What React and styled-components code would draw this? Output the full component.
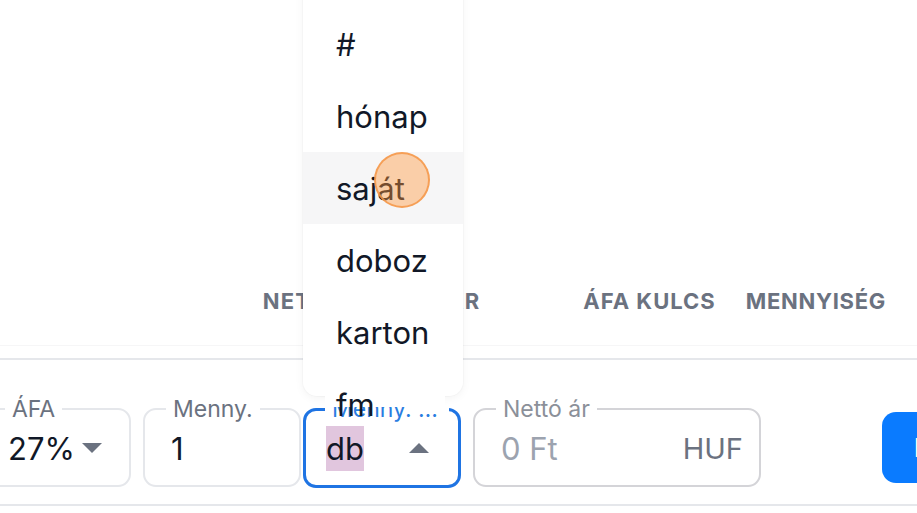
import React from "react";
import styled, { createGlobalStyle } from "styled-components";

const GlobalStyle = createGlobalStyle`
  html, body {
    margin: 0;
    padding: 0;
    background: #ffffff;
    overflow: hidden;
  }
  body {
    font-family: Inter, "Noto Sans", "Liberation Sans", sans-serif;
    color: #111827;
  }
`;

const Page = styled.div`
  width: 917px;
  height: 513px;
  overflow: hidden;
  position: relative;
`;

const HeaderRow = styled.div`
  height: 346px;
  box-sizing: border-box;
  display: flex;
  justify-content: flex-end;
  align-items: flex-end;
  gap: 30px;
  padding: 0 31px 31px 0;
  border-bottom: 1px solid #f6f6f7;
`;

const HeaderCell = styled.div`
  font-size: 22px;
  line-height: 26px;
  font-weight: 700;
  color: #6b7280;
  letter-spacing: ${(p) => p.$ls || 0.7}px;
  text-transform: uppercase;
  margin-right: ${(p) => p.$extra || 0}px;
  white-space: nowrap;
`;

const Divider = styled.div`
  height: 2px;
  background: #e5e7eb;
  margin-top: ${(p) => p.$top || 0}px;
`;

const FieldRow = styled.div`
  display: flex;
  align-items: flex-start;
  margin: 35px 0 0 -18px;
  height: 109px;
`;

const FieldWrap = styled.div`
  position: relative;
  flex: none;
  width: ${(p) => p.$w}px;
  margin-left: ${(p) => p.$ml || 0}px;
`;

const Box = styled.fieldset`
  margin: 0;
  padding: 0 16px 12px ${(p) => p.$pl || 26}px;
  box-sizing: border-box;
  width: 100%;
  border: ${(p) => (p.$focused ? "3px solid #1f74e3" : `2px solid ${p.$border || "#e5e7eb"}`)};
  border-radius: 13px;
  min-width: 0;
`;

const Legend = styled.legend`
  font-size: 23px;
  line-height: 28px;
  padding: 0 7px;
  margin-left: ${(p) => p.$ml || 0}px;
  color: ${(p) => p.$color || "#6b7280"};
  white-space: nowrap;
  max-width: 110px;
  overflow: hidden;
  text-overflow: ellipsis;
`;

const Content = styled.div`
  height: 50px;
  display: flex;
  align-items: center;
  justify-content: ${(p) => (p.$spread ? "space-between" : "flex-start")};
  gap: ${(p) => p.$gap || 0}px;
`;

const Value = styled.span`
  font-size: 31px;
  line-height: 45px;
  color: ${(p) => p.$color || "#111827"};
  background: ${(p) => p.$bg || "transparent"};
`;

const Suffix = styled.span`
  font-size: 29px;
  color: #6b7280;
`;

const Caret = styled.span`
  width: 0;
  height: 0;
  border-left: 10px solid transparent;
  border-right: 10px solid transparent;
  ${(p) =>
    p.$up
      ? "border-bottom: 10px solid #6b7280;"
      : "border-top: 10px solid #6b7280;"}
  margin-right: ${(p) => p.$mr || 0}px;
`;

const Menu = styled.div`
  position: absolute;
  left: 0;
  bottom: 100%;
  margin-bottom: -1px;
  width: 160px;
  height: 420px;
  box-sizing: border-box;
  padding-top: 32px;
  background: #ffffff;
  border-radius: 0 0 14px 14px;
  box-shadow: 0 2px 10px rgba(0, 0, 0, 0.05), 0 0 0 1px rgba(0, 0, 0, 0.02);
  z-index: 5;
`;

const MenuItem = styled.div`
  position: relative;
  height: 72px;
  display: flex;
  align-items: center;
  padding-left: 33px;
  font-size: 31px;
  color: #111827;
  background: ${(p) =>
    p.$active
      ? "#f6f6f7"
      : p.$spill
      ? "linear-gradient(#ffffff, #ffffff) 22px 0 / 120px 39px no-repeat"
      : "transparent"};
`;

const Touch = styled.span`
  position: absolute;
  left: 71px;
  top: 0;
  width: 56px;
  height: 56px;
  box-sizing: border-box;
  border-radius: 50%;
  background: rgba(255, 150, 60, 0.42);
  border: 2px solid rgba(244, 150, 72, 0.85);
`;

const AddButton = styled.button`
  flex: none;
  margin: 17px 0 0 121px;
  height: 71px;
  padding: 0 20px 0 32px;
  border: none;
  border-radius: 14px;
  background: #0a7bff;
  color: #ffffff;
  font-family: inherit;
  font-size: 26px;
  font-weight: 600;
  white-space: nowrap;
`;

const units = ["#", "hónap", "saját", "doboz", "karton", "fm"];

export default function App() {
  return (
    <Page>
      <GlobalStyle />
      <HeaderRow>
        <HeaderCell $extra={73} $ls={1.2}>Nettó egységár</HeaderCell>
        <HeaderCell $ls={1}>Áfa kulcs</HeaderCell>
        <HeaderCell>Mennyiség</HeaderCell>
      </HeaderRow>
      <Divider $top={12} />
      <FieldRow>
        <FieldWrap $w={149}>
          <Box $pl={24}>
            <Legend $ml={-3}>ÁFA</Legend>
            <Content $gap={7}>
              <Value>27%</Value>
              <Caret />
            </Content>
          </Box>
        </FieldWrap>
        <FieldWrap $w={158} $ml={12}>
          <Box>
            <Legend $ml={-5}>Menny.</Legend>
            <Content>
              <Value>1</Value>
            </Content>
          </Box>
        </FieldWrap>
        <FieldWrap $w={158} $ml={2}>
          <Menu>
            {units.map((u, i) => (
              <MenuItem
                key={u}
                $active={u === "saját"}
                $spill={i === units.length - 1}
              >
                {u}
                {u === "saját" && <Touch />}
              </MenuItem>
            ))}
          </Menu>
          <Box $focused $pl={20}>
            <Legend $ml={-1} $color="#2a7de1">Menny. egység</Legend>
            <Content $spread>
              <Value $bg="#e1c6de">db</Value>
              <Caret $up $mr={13} />
            </Content>
          </Box>
        </FieldWrap>
        <FieldWrap $w={288} $ml={12}>
          <Box $border="#d4d4d8">
            <Legend $ml={-5} $color="#8b9099">Nettó ár</Legend>
            <Content $spread>
              <Value $color="#9ca3af">0 Ft</Value>
              <Suffix>HUF</Suffix>
            </Content>
          </Box>
        </FieldWrap>
        <AddButton>Hozzáadás</AddButton>
      </FieldRow>
      <Divider />
    </Page>
  );
}
